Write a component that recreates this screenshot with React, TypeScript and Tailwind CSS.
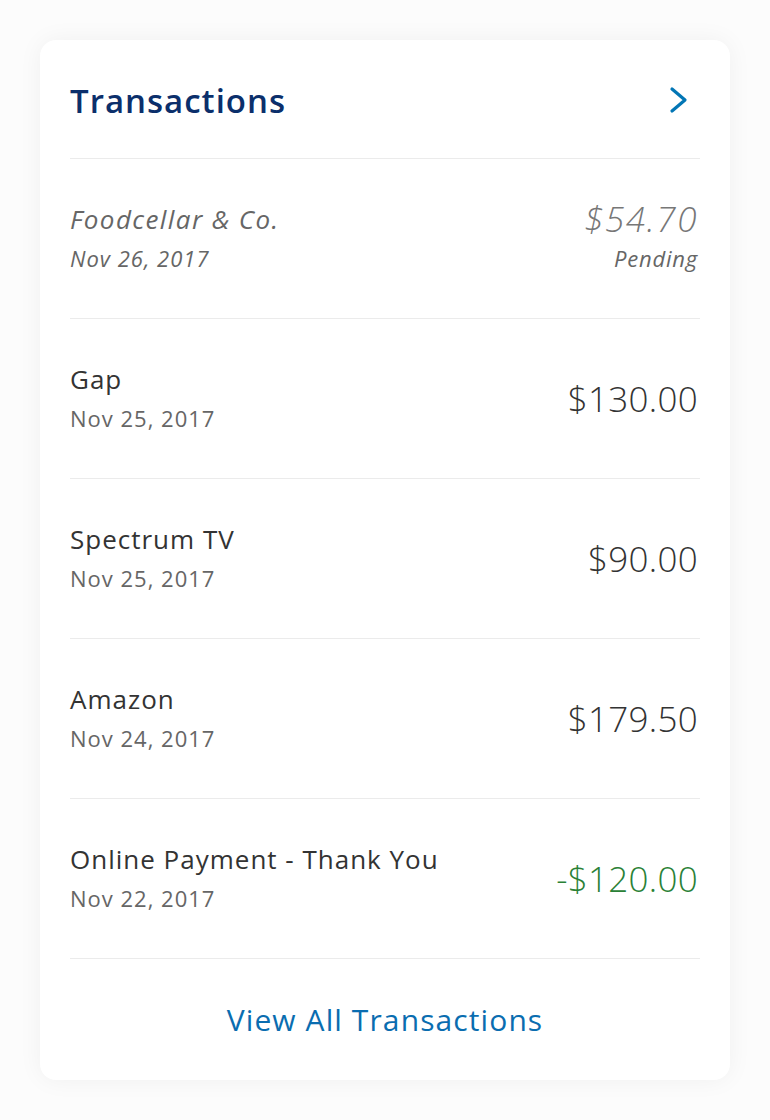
interface Txn {
  name: string;
  date: string;
  amount: string;
  pending?: boolean;
  credit?: boolean;
}

const txns: Txn[] = [
  { name: 'Foodcellar & Co.', date: 'Nov 26, 2017', amount: '$54.70', pending: true },
  { name: 'Gap', date: 'Nov 25, 2017', amount: '$130.00' },
  { name: 'Spectrum TV', date: 'Nov 25, 2017', amount: '$90.00' },
  { name: 'Amazon', date: 'Nov 24, 2017', amount: '$179.50' },
  { name: 'Online Payment - Thank You', date: 'Nov 22, 2017', amount: '-$120.00', credit: true },
];

function Row({ t }: { t: Txn }) {
  return (
    <div className="h-[160px] border-b border-[#ebebeb] flex items-center justify-between">
      <div className="flex flex-col">
        <span className={`text-[26px] leading-[38px] ${t.pending ? 'italic text-[#666] tracking-[1.4px]' : 'text-[#333] tracking-[1px]'}`}>
          {t.name}
        </span>
        <span className={`text-[22px] leading-[40px] tracking-[1px] text-[#666] ${t.pending ? 'italic' : ''}`}>{t.date}</span>
      </div>
      {t.pending ? (
        <div className="flex flex-col items-end mr-[2px]">
          <span className="text-[35px] leading-[38px] italic text-[#777] font-light tracking-[1.6px]">{t.amount}</span>
          <span className="text-[22px] leading-[40px] italic text-[#666] tracking-[0.8px]">Pending</span>
        </div>
      ) : (
        <span className={`text-[35px] leading-[40px] font-light tracking-[0.3px] mr-[2px] ${t.credit ? 'text-[#2a8136]' : 'text-[#333]'}`}>
          {t.amount}
        </span>
      )}
    </div>
  );
}

export default function App() {
  return (
    <div className="min-h-[1120px] bg-[#fcfcfc] p-[40px]" style={{ fontFamily: '"Open Sans", "Liberation Sans", sans-serif' }}>
      <div className="bg-white rounded-[16px] shadow-[0_0_24px_rgba(0,0,0,0.05)] px-[30px] h-[1040px] flex flex-col">
        <div className="h-[119px] border-b border-[#ebebeb] flex items-center justify-between pt-[2px]">
          <h1 className="text-[33px] leading-none font-semibold text-[#0b2f6b] tracking-[1px]">Transactions</h1>
          <svg width="20" height="28" viewBox="0 0 20 28" className="mr-[11px]" fill="none">
            <polyline points="3,3 16,14 3,25" stroke="#0276b5" strokeWidth="3.2" strokeLinecap="round" strokeLinejoin="round" />
          </svg>
        </div>
        {txns.map((t) => (
          <Row key={t.name} t={t} />
        ))}
        <div className="flex-1 flex items-center justify-center">
          <span className="text-[30px] font-medium text-[#0a6db0] tracking-[1.1px]">View All Transactions</span>
        </div>
      </div>
    </div>
  );
}
